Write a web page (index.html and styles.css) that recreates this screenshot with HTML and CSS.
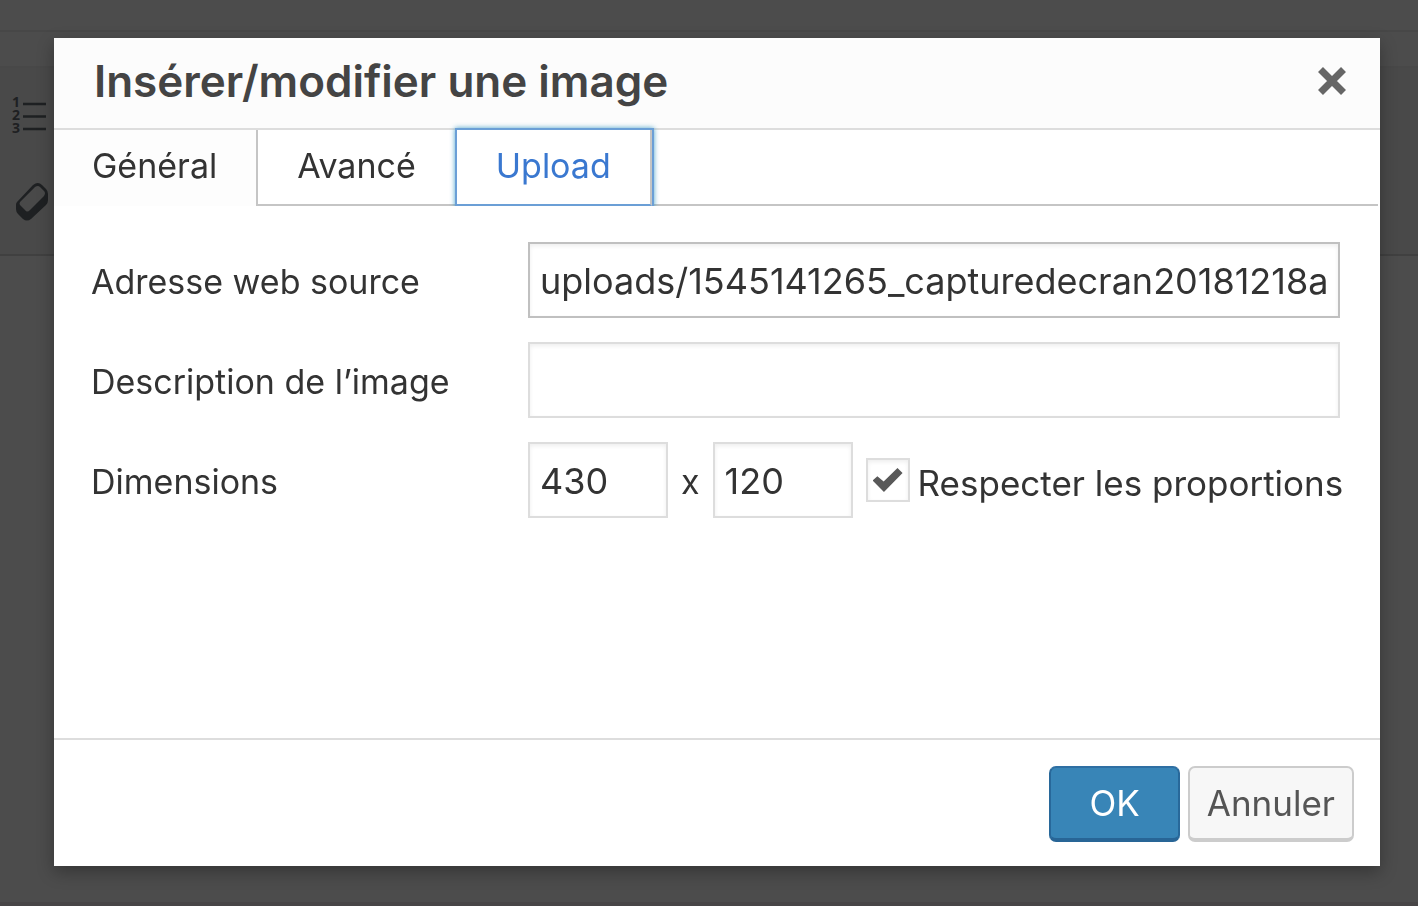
FILE: index.html
```html
<!DOCTYPE html>
<html lang="fr">
<head>
  <meta charset="UTF-8" />
  <meta name="viewport" content="width=device-width, initial-scale=1.0" />
  <title>Insérer/modifier une image</title>
  <link rel="stylesheet" href="styles.css">
</head>
<body>
  <div class="editor">
    <div class="editor-top"></div>
    <div class="editor-menu"></div>
    <div class="editor-toolbar">
      <svg class="tool-list" viewBox="0 0 36 38" aria-hidden="true">
        <g class="tool-numbers">
          <text x="0" y="11">1</text>
          <text x="0" y="24">2</text>
          <text x="0" y="37">3</text>
        </g>
        <path d="M11 8h23M11 20.5h23M11 33h23" fill="none" stroke="currentColor" stroke-width="2.4" />
      </svg>
      <svg class="tool-eraser" viewBox="0 0 34 40" aria-hidden="true">
        <path d="M2 21L18 4q5-4 9 0l4 4q2 2 2 5v6q0 3-2 5L16 38q-4 3-8 0l-5-5q-2-2-2-5v-4q0-2 1-3z" fill="currentColor" />
        <path d="M5 21L20 6q3-2 5 0l4 4q2 2 0 5L15 29q-3 3-5 0l-5-5q-1-1 0-3z" fill="#494949" />
      </svg>
    </div>
    <div class="editor-page"></div>
  </div>

  <div class="overlay">
    <div class="dialog" role="dialog" aria-labelledby="dialogTitle">
      <div class="dialog-header">
        <h1 id="dialogTitle">Insérer/modifier une image</h1>
        <button class="close-btn" type="button" aria-label="Fermer">
          <svg viewBox="0 0 28 28" aria-hidden="true">
            <path d="M2.5 2.5l23 23M25.5 2.5l-23 23" fill="none" stroke="currentColor" stroke-width="7" />
          </svg>
        </button>
      </div>

      <div class="tabs" role="tablist">
        <button class="tab active" type="button" role="tab">Général</button>
        <button class="tab" type="button" role="tab">Avancé</button>
        <button class="tab focus" type="button" role="tab">Upload</button>
      </div>

      <form class="dialog-body" id="imageForm">
        <div class="row">
          <label for="source">Adresse web source</label>
          <input class="field source" type="text" id="source" value="uploads/1545141265_capturedecran20181218a" />
        </div>
        <div class="row">
          <label for="description">Description de l’image</label>
          <input class="field" type="text" id="description" />
        </div>
        <div class="row">
          <label for="width">Dimensions</label>
          <div class="dimensions">
            <input class="field size" type="text" id="width" value="430" />
            <label for="height">x</label>
            <input class="field size" type="text" id="height" value="120" />
            <div class="keep-ratio">
              <input type="checkbox" class="check" id="ratio" checked />
              <label for="ratio">Respecter les proportions</label>
            </div>
          </div>
        </div>
      </form>

      <div class="dialog-footer">
        <button class="btn primary" type="submit" form="imageForm">OK</button>
        <button class="btn" type="button">Annuler</button>
      </div>
    </div>
  </div>
</body>
</html>
```

FILE: styles.css
```css
* {
  box-sizing: border-box;
}

body {
  margin: 0;
  font-family: Inter, "Liberation Sans", sans-serif;
  font-size: 34px;
  color: #333;
  background: #4c4c4c;
}

button,
input {
  font: inherit;
  color: inherit;
}

/* editor behind the dialog */
.editor {
  display: flex;
  flex-direction: column;
  height: 100vh;
  color: #1e2022;
}

.editor-top {
  height: 32px;
  border-bottom: 2px solid #474747;
}

.editor-menu {
  height: 36px;
  border-bottom: 2px solid #484848;
}

.editor-toolbar {
  display: flex;
  flex-direction: column;
  align-items: flex-start;
  gap: 47px;
  height: 188px;
  padding: 28px 12px;
  background: #494949;
  border-bottom: 2px solid #404040;
}

.editor-page {
  flex: 1;
  border-bottom: 4px solid #474546;
}

.tool-list {
  flex: none;
  width: 36px;
  height: 38px;
  overflow: visible;
}

.tool-numbers {
  fill: currentColor;
  font-family: "Open Sans", sans-serif;
  font-size: 14px;
  font-weight: 700;
}

.tool-eraser {
  flex: none;
  width: 34px;
  height: 40px;
  margin-left: 3px;
}

/* dialog */
.overlay {
  position: fixed;
  inset: 0;
  display: flex;
  padding: 38px 38px 40px 54px;
}

.dialog {
  flex: 1;
  display: flex;
  flex-direction: column;
  min-width: 0;
  background: #fff;
  box-shadow: 0 6px 16px rgba(0, 0, 0, 0.3);
}

.dialog-header {
  display: flex;
  align-items: center;
  justify-content: space-between;
  height: 92px;
  padding: 0 34px 4px 40px;
  background: #fcfcfc;
  border-bottom: 2px solid #ddd;
}

.dialog-header h1 {
  margin: 0;
  font-size: 44px;
  font-weight: 600;
  line-height: 60px;
  color: #444;
}

.close-btn {
  display: flex;
  padding: 0;
  border: none;
  background: transparent;
  color: #666;
  cursor: pointer;
}

.close-btn svg {
  width: 28px;
  height: 28px;
}

.tabs {
  display: flex;
  height: 76px;
  margin-right: 2px;
}

.tabs::after {
  content: "";
  flex: 1;
  border-bottom: 2px solid #c5c5c5;
}

.tab {
  padding: 0 39px 4px;
  border: solid #c5c5c5;
  border-width: 0 2px 2px 0;
  background: #fff;
  cursor: pointer;
}

.tab.active {
  padding: 0 39px 6px 38px;
  border-width: 0 2px 0 0;
  background: #fdfdfd;
}

.tab.focus {
  position: relative;
  color: #3a78d0;
  border-bottom-color: #6b9fd6;
  box-shadow: 0 0 0 2px #6b9fd6, 0 0 5px 2px rgba(30, 140, 190, 0.8);
  clip-path: inset(-8px -8px 0);
}

.dialog-body {
  flex: 1;
  display: flex;
  flex-direction: column;
  gap: 24px;
  padding: 36px 40px 36px 37px;
}

.row {
  display: grid;
  grid-template-columns: 437px 1fr;
  align-items: center;
}

.row label {
  padding-top: 2px;
}

.field {
  width: 100%;
  min-width: 0;
  height: 76px;
  padding: 2px 8px 0 10px;
  border: 2px solid #ddd;
  border-radius: 0;
  background: #fff;
  box-shadow: inset 0 2px 4px rgba(0, 0, 0, 0.07);
  font-size: 36px;
  outline: none;
}

.field.source {
  border-color: #c0c0c0;
}

.dimensions {
  display: flex;
  align-items: center;
  gap: 13px;
}

.field.size {
  flex: none;
  width: 140px;
}

.keep-ratio {
  display: flex;
  align-items: center;
  gap: 8px;
  font-size: 35px;
  white-space: nowrap;
}

.row .keep-ratio label {
  padding-top: 6px;
}

.check {
  appearance: none;
  display: grid;
  place-items: center;
  flex: none;
  width: 44px;
  height: 44px;
  margin: 0;
  border: 2px solid #ddd;
  background: #fff;
  box-shadow: inset 0 2px 4px rgba(0, 0, 0, 0.07);
}

.check:checked::before {
  content: "";
  width: 30px;
  height: 24px;
  background: #595959;
  clip-path: polygon(0 52%, 16% 34%, 37% 56%, 83% 0, 100% 21%, 38% 100%);
}

.dialog-footer {
  display: flex;
  justify-content: flex-end;
  gap: 8px;
  padding: 26px 26px 24px;
  border-top: 2px solid #ddd;
}

.btn {
  height: 76px;
  padding: 0 17px;
  border: 2px solid #ccc;
  border-bottom-width: 4px;
  border-radius: 7px;
  background: #f7f7f7;
  color: #555;
  font-size: 35px;
  cursor: pointer;
}

.btn.primary {
  padding: 0 38px;
  border-color: #2e6fa3 #28689a #286596;
  background: #3885b7;
  color: #fff;
}
```
